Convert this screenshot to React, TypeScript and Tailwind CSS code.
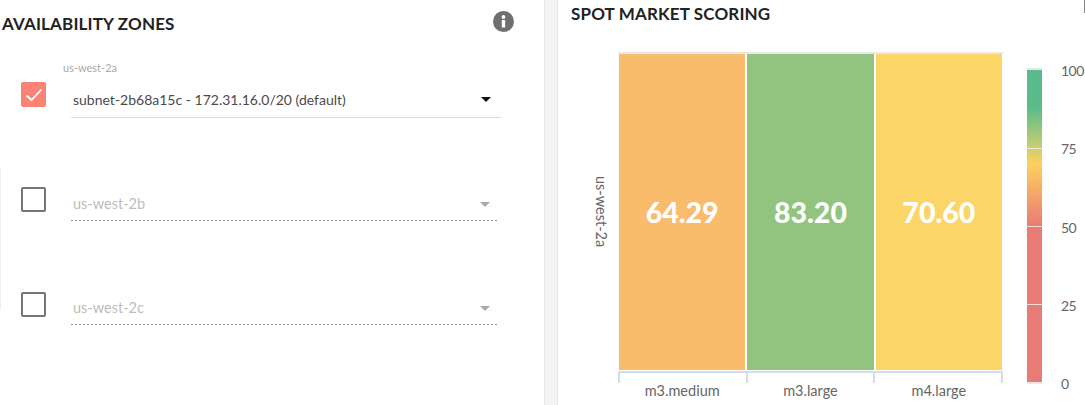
const font = { fontFamily: '"Lato", "Open Sans", sans-serif' };

const cells = [
  { name: "m3.medium", score: "64.29", color: "bg-[#f9bc6c]" },
  { name: "m3.large", score: "83.20", color: "bg-[#92c47f]" },
  { name: "m4.large", score: "70.60", color: "bg-[#fbd568]" },
];

function DisabledZone({ name, boxTop }: { name: string; boxTop: string }) {
  return (
    <div className="flex h-[104px] items-start pl-[21px]">
      <div className={`${boxTop} h-[25px] w-[25px] rounded-[2px] border-2 border-[#757575]`} />
      <div className="ml-[25px] mt-[22px] w-[428px]">
        <div className="flex h-[32px] items-center justify-between pl-[2px] pr-[9px]">
          <span className="text-[14.5px] text-[#bdbdbd]">{name}</span>
          <span className="h-0 w-0 border-x-[5px] border-t-[5px] border-x-transparent border-t-[#a8a8a8]" />
        </div>
        <div className="h-px bg-[repeating-linear-gradient(to_right,#8f8f8f_0,#8f8f8f_2px,transparent_2px,transparent_4px)]" />
      </div>
    </div>
  );
}

export default function App() {
  return (
    <div className="relative flex h-[405px] w-[1085px] overflow-hidden bg-white" style={font}>
      {/* Availability zones */}
      <div className="relative w-[544px] shrink-0">
        <div className="flex h-[62px] items-start justify-between pl-[2px] pr-[30px]">
          <h2 className="mt-[14px] text-[17px] font-bold leading-5 tracking-[0.15px] text-[#222]">AVAILABILITY ZONES</h2>
          <svg className="mt-[11px]" width="21" height="21" viewBox="0 0 21 21">
            <circle cx="10.5" cy="10.5" r="10.5" fill="#6f6f6f" />
            <circle cx="10.5" cy="6" r="1.9" fill="white" />
            <rect x="8.8" y="9" width="3.4" height="7.5" rx="0.5" fill="white" />
          </svg>
        </div>

        <div className="flex h-[63px] items-start pl-[21px]">
          <div className="mt-[20px] flex h-[25px] w-[25px] items-center justify-center rounded-[2px] bg-[#fb8375]">
            <svg width="18" height="14" viewBox="0 0 18 14" fill="none" stroke="white" strokeWidth="1.8">
              <path d="M1.5 7.5 L6.5 12 L16.5 1.5" />
            </svg>
          </div>
          <div className="ml-[25px] w-[430px]">
            <div className="-ml-[8px] text-[11px] leading-3 text-[#a9a9a9]">us-west-2a</div>
            <div className="mt-[8px] flex h-[36px] items-center justify-between border-b border-[#dcdcdc] pl-[2px] pr-[10px]">
              <span className="text-[14px] text-[#4a4a4a]">subnet-2b68a15c - 172.31.16.0/20 (default)</span>
              <span className="h-0 w-0 border-x-[5px] border-t-[5px] border-x-transparent border-t-[#111]" />
            </div>
          </div>
        </div>

        <div className="pt-[41px]">
          <DisabledZone name="us-west-2b" boxTop="mt-[21px]" />
          <DisabledZone name="us-west-2c" boxTop="mt-[22px]" />
        </div>

        {/* faint edge on the far left */}
        <div className="absolute left-0 top-[167px] h-[143px] w-px bg-[#efefef]" />
      </div>

      <div className="w-[14px] shrink-0 border-x border-[#e6e6e6] bg-[#f3f3f3]" />

      {/* Spot market scoring */}
      <div className="flex-1 pl-[13px]">
        <h2 className="mt-[4px] text-[17px] font-bold leading-5 tracking-[0.15px] text-[#222]">SPOT MARKET SCORING</h2>

        <div className="mt-[28px] flex items-start">
          <div className="h-[319px] w-[47px] shrink-0 pl-[21px]">
            <div className="flex h-[319px] w-[18px] items-center justify-center [writing-mode:vertical-rl]">
              <span className="text-[14.5px] text-[#666]">us-west-2a</span>
            </div>
          </div>

          <div className="w-[385px] shrink-0">
            <div className="h-[319px] border-t-2 border-[#e8e8e8] px-[1px] pb-[1px]">
              <div className="flex h-full gap-[2px]">
                {cells.map((c) => (
                  <div
                    key={c.name}
                    className={`flex flex-1 items-center justify-center ${c.color} text-[28.5px] font-black text-white`}
                  >
                    {c.score}
                  </div>
                ))}
              </div>
            </div>
            <div className="flex h-[12px] border-t-2 border-[#d3dcea]">
              {cells.map((c) => (
                <div key={c.name} className="flex-1 border-l-2 border-[#d3dcea] last:border-r-2" />
              ))}
            </div>
            <div className="flex">
              {cells.map((c) => (
                <div key={c.name} className="flex-1 text-center text-[14.5px] leading-4 text-[#666]">
                  {c.name}
                </div>
              ))}
            </div>
          </div>

          <div className="ml-[24px] mt-[16px] flex h-[316px]">
            <div className="relative h-[316px] w-[15px] border-y-2 border-[#e8e8e8] bg-[linear-gradient(to_bottom,#5cbb8a_0%,#5cbb8a_12%,#c9cf6e_25%,#fdd05e_30%,#f4a56b_40%,#e87b73_50%,#e87b73_100%)]">
              <div className="absolute left-0 top-[25%] h-px w-full bg-[#e8e8e8]" />
              <div className="absolute left-0 top-[50%] h-px w-full bg-[#f3dcdc]" />
              <div className="absolute left-0 top-[75%] h-px w-full bg-[#f3dcdc]" />
            </div>
            <div className="-mt-[5px] ml-[19px] flex h-[329px] flex-col justify-between text-[14px] leading-4 tracking-[-0.5px] text-[#666]">
              <span>100</span>
              <span>75</span>
              <span>50</span>
              <span>25</span>
              <span>0</span>
            </div>
          </div>
        </div>
      </div>

      <div className="absolute right-0 top-0 h-[13px] w-px bg-[#888]" />
    </div>
  );
}
